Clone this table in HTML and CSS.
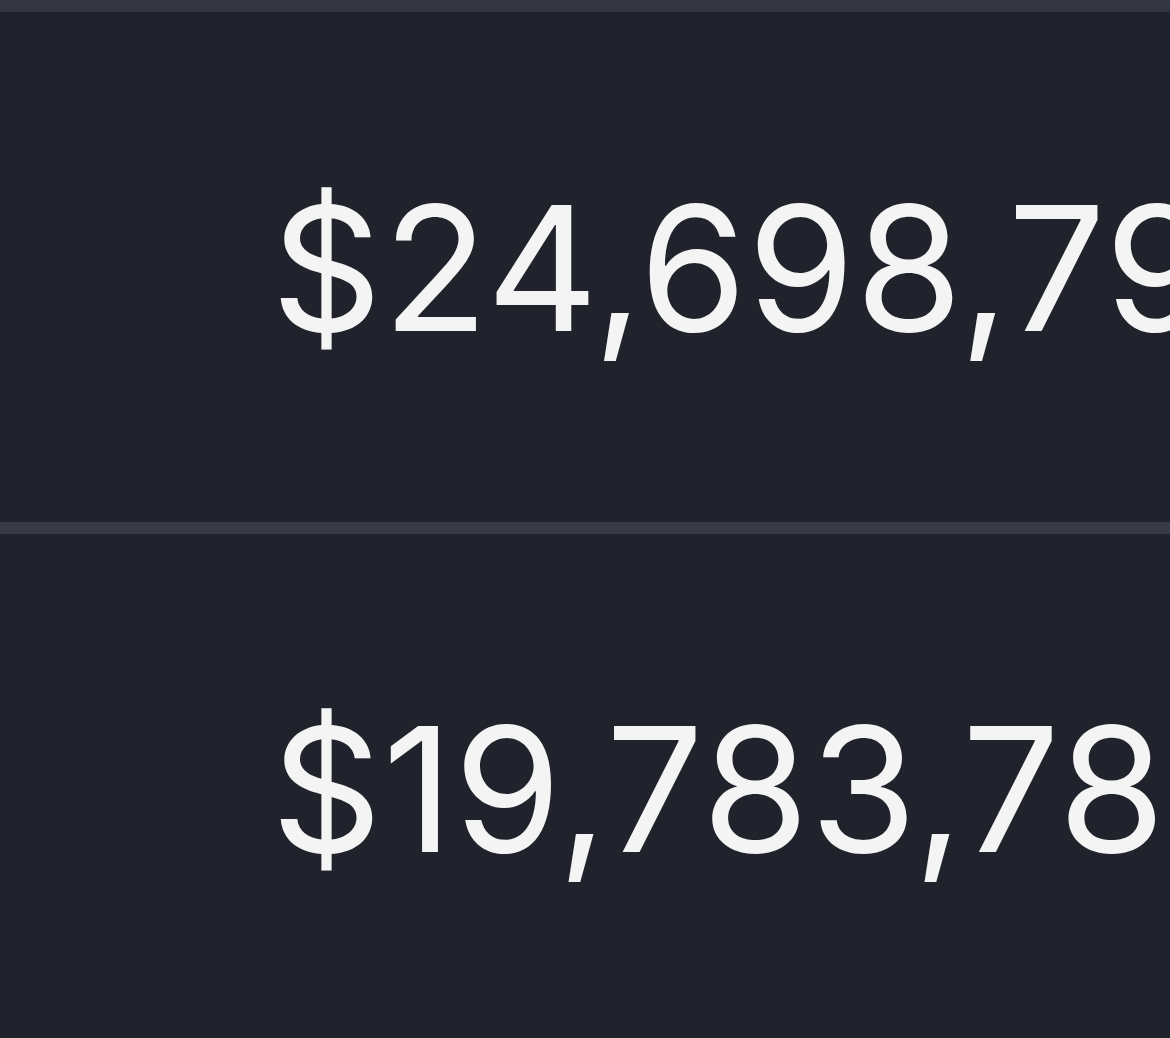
FILE: index.html
```html
<!DOCTYPE html>
<html>
<head>
<meta charset="utf-8">
<link rel="stylesheet" href="styles.css">
</head>
<body>
<div class="table">
  <div class="top-edge"></div>
  <div class="row first">
    <div class="cell lead"></div>
    <div class="cell amount">$24,698,799</div>
  </div>
  <div class="row">
    <div class="cell lead"></div>
    <div class="cell amount">$19,783,788</div>
  </div>
</div>
</body>
</html>
```

FILE: styles.css
```css
html, body {
  margin: 0;
  padding: 0;
  background: #20232b;
  overflow: hidden;
}
.table {
  width: 1170px;
  height: 1038px;
  overflow: hidden;
  display: flex;
  flex-direction: column;
}
.top-edge {
  height: 4px;
  background: #282a31;
}
.row {
  display: flex;
  align-items: center;
  height: 507px;
  flex-shrink: 0;
  border-top: 12px solid #33363e;
  box-sizing: content-box;
}
.row.first {
  height: 508px;
  padding-top: 2px;
}
.row + .row {
  border-top: 12px solid #3a3a44;
  padding-top: 2px;
}
.cell.lead {
  width: 271px;
  flex-shrink: 0;
}
.cell.amount {
  font-family: Inter, "Liberation Sans", Arial, sans-serif;
  font-size: 173px;
  font-weight: 400;
  letter-spacing: 0.8px;
  color: #f4f4f4;
  white-space: nowrap;
  line-height: 1;
}
```
